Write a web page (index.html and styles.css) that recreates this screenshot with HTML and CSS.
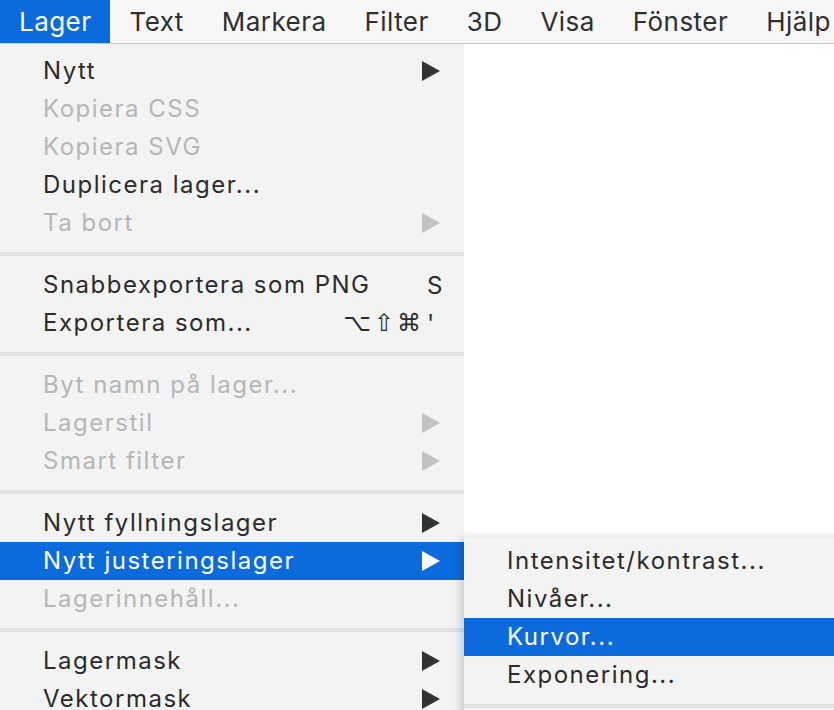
FILE: index.html
```html
<!DOCTYPE html>
<html lang="sv">
<head>
<meta charset="utf-8">
<title>Lager-meny</title>
<link rel="stylesheet" href="styles.css">
</head>
<body>
<div class="screen">
  <nav class="menubar">
    <span class="mb-item active">Lager</span>
    <span class="mb-item">Text</span>
    <span class="mb-item">Markera</span>
    <span class="mb-item">Filter</span>
    <span class="mb-item">3D</span>
    <span class="mb-item">Visa</span>
    <span class="mb-item">Fönster</span>
    <span class="mb-item">Hjälp</span>
  </nav>
  <div class="workspace">
    <div class="menu main-menu">
      <div class="row"><span class="label">Nytt</span><svg class="arrow" viewBox="0 0 18 20"><polygon points="0,0 18,10 0,20"/></svg></div>
      <div class="row disabled"><span class="label">Kopiera CSS</span></div>
      <div class="row disabled"><span class="label">Kopiera SVG</span></div>
      <div class="row"><span class="label">Duplicera lager...</span></div>
      <div class="row disabled"><span class="label">Ta bort</span><svg class="arrow" viewBox="0 0 18 20"><polygon points="0,0 18,10 0,20"/></svg></div>
      <div class="sep"></div>
      <div class="row"><span class="label">Snabbexportera som PNG</span><span class="mods"></span><span class="key">S</span></div>
      <div class="row"><span class="label">Exportera som...</span><span class="mods">⌥⇧⌘</span><span class="key">'</span></div>
      <div class="sep"></div>
      <div class="row disabled"><span class="label">Byt namn på lager...</span></div>
      <div class="row disabled"><span class="label">Lagerstil</span><svg class="arrow" viewBox="0 0 18 20"><polygon points="0,0 18,10 0,20"/></svg></div>
      <div class="row disabled"><span class="label">Smart filter</span><svg class="arrow" viewBox="0 0 18 20"><polygon points="0,0 18,10 0,20"/></svg></div>
      <div class="sep"></div>
      <div class="row"><span class="label">Nytt fyllningslager</span><svg class="arrow" viewBox="0 0 18 20"><polygon points="0,0 18,10 0,20"/></svg></div>
      <div class="row selected"><span class="label">Nytt justeringslager</span><svg class="arrow" viewBox="0 0 18 20"><polygon points="0,0 18,10 0,20"/></svg></div>
      <div class="row disabled"><span class="label">Lagerinnehåll...</span></div>
      <div class="sep"></div>
      <div class="row"><span class="label">Lagermask</span><svg class="arrow" viewBox="0 0 18 20"><polygon points="0,0 18,10 0,20"/></svg></div>
      <div class="row"><span class="label">Vektormask</span><svg class="arrow" viewBox="0 0 18 20"><polygon points="0,0 18,10 0,20"/></svg></div>
    </div>
    <div class="menu submenu">
      <div class="row"><span class="label">Intensitet/kontrast...</span></div>
      <div class="row"><span class="label">Nivåer...</span></div>
      <div class="row selected"><span class="label">Kurvor...</span></div>
      <div class="row"><span class="label">Exponering...</span></div>
      <div class="sep"></div>
    </div>
  </div>
</div>
</body>
</html>
```
FILE: styles.css
```css
html, body {
  margin: 0;
  padding: 0;
  background: #ffffff;
}

.screen {
  width: 834px;
  height: 710px;
  overflow: hidden;
  position: relative;
  font-family: Inter, "Liberation Sans", sans-serif;
  color: #2b2b2b;
}

.menubar {
  display: flex;
  height: 43px;
  background: #f7f7f7;
  border-bottom: 1px solid #c9c9c9;
  font-size: 26px;
  letter-spacing: 0.45px;
  white-space: nowrap;
}

.mb-item {
  display: flex;
  align-items: center;
  padding: 0 19px;
  color: #2f2f2f;
}

.mb-item.active {
  background: #0b6bdc;
  color: #ffffff;
}

.workspace {
  position: relative;
}

.menu {
  background: #f3f3f3;
  font-size: 24px;
  letter-spacing: 1.5px;
  white-space: nowrap;
}

.main-menu {
  width: 464px;
  padding-top: 8px;
}

.submenu {
  position: absolute;
  left: 464px;
  top: 494px;
  width: 400px;
  padding-top: 4px;
  box-shadow: -3px 0 9px rgba(0, 0, 0, 0.18);
}

.row {
  display: flex;
  align-items: center;
  height: 38px;
  padding-left: 43px;
  padding-right: 24px;
  color: #2b2b2b;
}

.label {
  flex: 1;
  line-height: 38px;
}

.row.disabled {
  color: #b6b6b6;
}

.row.selected {
  background: #0b6bdc;
  color: #ffffff;
}

.arrow {
  width: 18px;
  height: 20px;
  fill: #333333;
}

.row.disabled .arrow {
  fill: #c2c2c2;
}

.row.selected .arrow {
  fill: #ffffff;
}

.mods {
  font-family: "DejaVu Sans", sans-serif;
  font-size: 24px;
  letter-spacing: 3px;
  text-align: right;
}

.key {
  width: 15px;
  padding-left: 3px;
  margin-right: -2px;
}

.sep {
  height: 24px;
  display: flex;
  align-items: center;
}

.sep::before {
  content: "";
  display: block;
  width: 100%;
  height: 4px;
  background: #e2e2e2;
}
```
